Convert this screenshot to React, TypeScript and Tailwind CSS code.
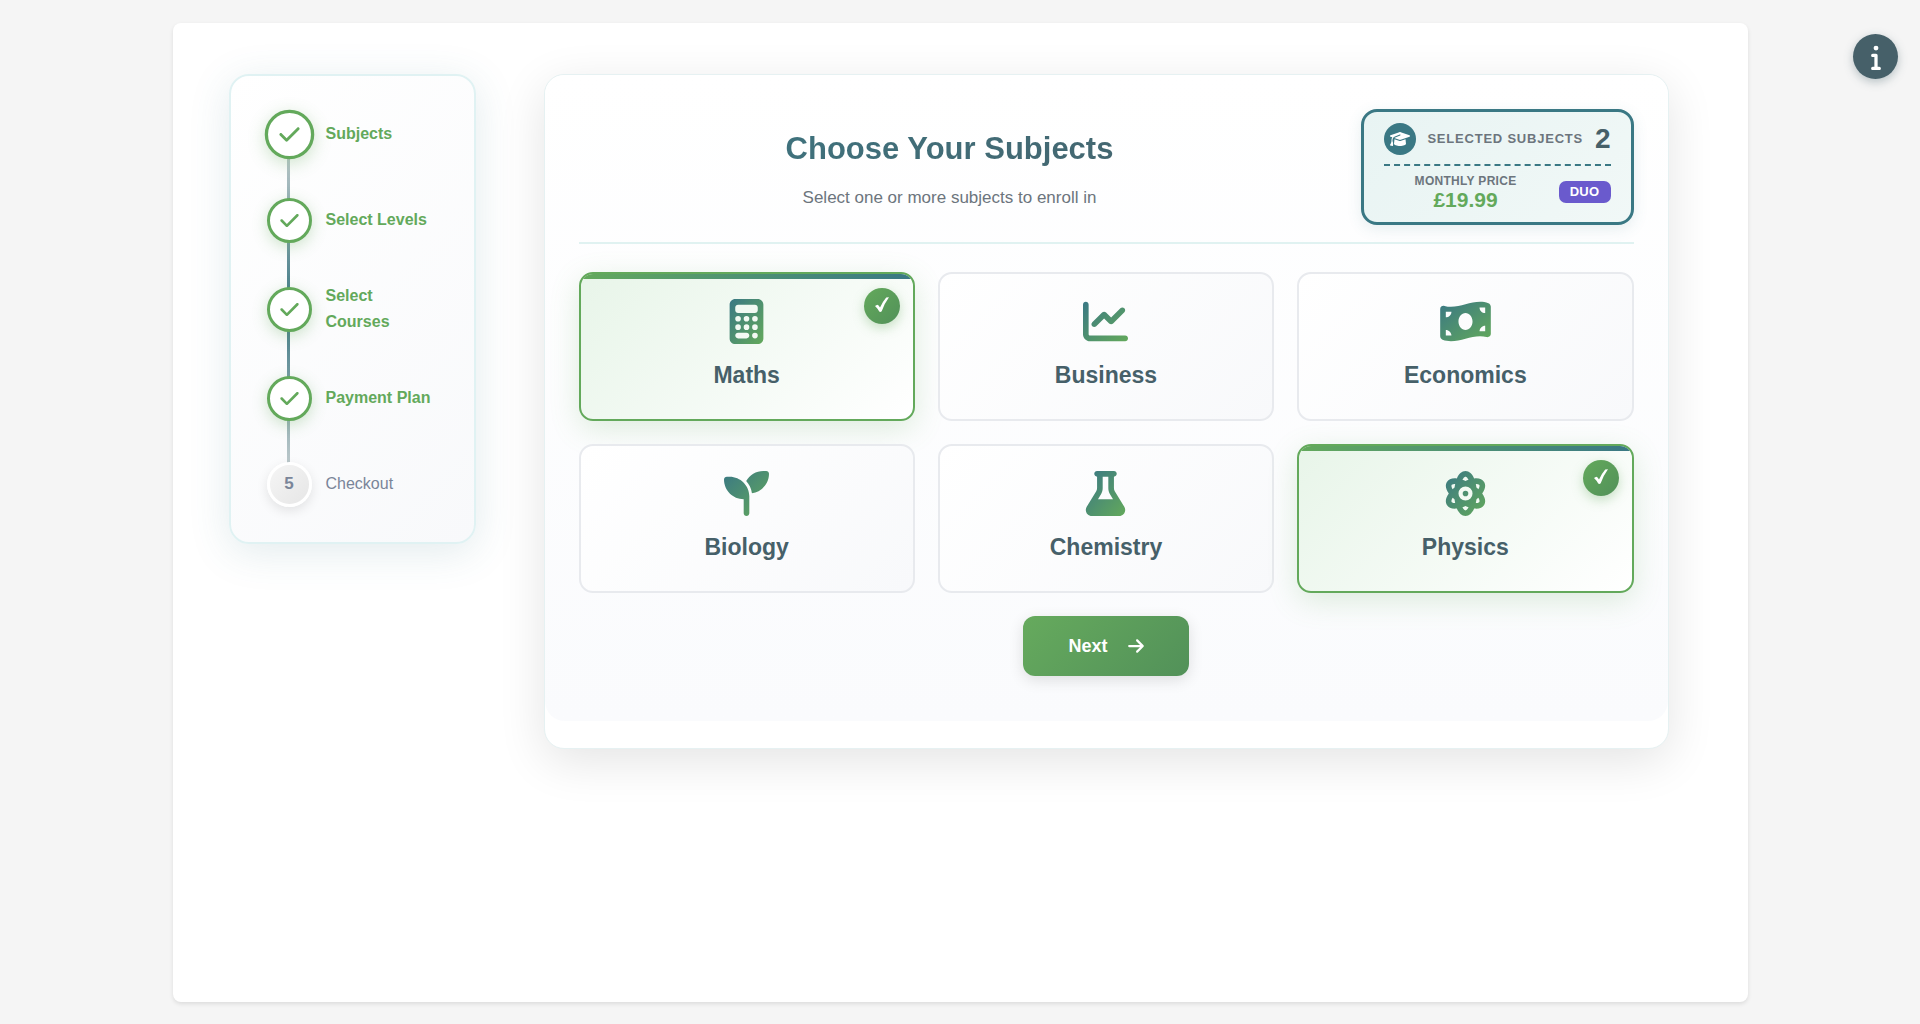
import React, { useState } from 'react';
import {
  FaArrowRight,
  FaAtom,
  FaCalculator,
  FaChartLine,
  FaCheck,
  FaFlask,
  FaGraduationCap,
  FaInfo,
  FaMoneyBillWave,
  FaSeedling,
} from 'react-icons/fa6';
import { clsx } from 'clsx';

const steps = [
  { label: 'Subjects', done: true, current: true },
  { label: 'Select Levels', done: true },
  { label: 'Select Courses', done: true },
  { label: 'Payment Plan', done: true },
  { label: 'Checkout', done: false },
];

const subjects = [
  { name: 'Maths', icon: FaCalculator },
  { name: 'Business', icon: FaChartLine },
  { name: 'Economics', icon: FaMoneyBillWave },
  { name: 'Biology', icon: FaSeedling },
  { name: 'Chemistry', icon: FaFlask },
  { name: 'Physics', icon: FaAtom },
];

const plans = [
  { name: 'NONE', price: '£0.00' },
  { name: 'SOLO', price: '£11.99' },
  { name: 'DUO', price: '£19.99' },
  { name: 'TRIO', price: '£26.99' },
];

const StepNav = () => (
  <nav
    aria-label="Enrolment steps"
    className="w-[247px] shrink-0 rounded-[20px] border-2 border-[#e0f2f3] bg-linear-135 from-white to-[#f8f9fb] py-[35px] pr-[33px] pl-9 shadow-[0_8px_40px_rgba(58,120,132,0.15)]"
  >
    <ol className="relative flex flex-col gap-10">
      <span className="absolute inset-y-0 left-5 w-[3px] bg-linear-to-b from-[#e0e0e0] via-[#3a7884] to-[#e0e0e0]" />
      {steps.map((step, index) => (
        <li key={step.label} className="relative flex min-h-[46px] items-center gap-[14px]">
          <span
            className={clsx(
              'flex size-[45px] shrink-0 items-center justify-center rounded-full border-3 text-[17px] font-bold',
              step.done
                ? 'border-[#63a95b] bg-white text-[#63a95b] shadow-[0_4px_15px_rgba(99,169,91,0.3)]'
                : 'border-white bg-linear-135 from-[#f5f5f5] to-[#e6e6e6] text-[#7a8599] shadow-[0_4px_12px_rgba(0,0,0,0.1)]',
              step.current && 'scale-110'
            )}
          >
            {step.done ? <FaCheck className="size-[21px]" /> : index + 1}
          </span>
          <a
            href="#"
            className={clsx('leading-[26px]', step.done ? 'font-bold text-[#63a95b]' : 'text-[#7a8599]')}
          >
            {step.label}
          </a>
        </li>
      ))}
    </ol>
  </nav>
);

const PriceSummary = ({ count }: { count: number }) => {
  const plan = plans[Math.min(count, plans.length - 1)];

  return (
    <div className="w-[273px] shrink-0 rounded-2xl border-3 border-[#3a7884] bg-linear-135 from-[#e8f4f3] to-[#f1f8f7] px-5 py-[11px] shadow-[0_4px_15px_rgba(58,120,132,0.12)]">
      <div className="flex items-center justify-between pb-[9px]">
        <span className="flex size-8 items-center justify-center rounded-full bg-[#3a7884] text-white">
          <FaGraduationCap className="h-4 w-5" />
        </span>
        <span className="text-[13px] font-bold tracking-[0.06em] text-[#6c757d]">SELECTED SUBJECTS</span>
        <span className="text-[28px] leading-8 font-bold text-[#466069]">{count}</span>
      </div>
      <div className="flex items-center gap-[11px] border-t-2 border-dashed border-[#3a7884] pt-[7px]">
        <div className="flex-1 text-center">
          <div className="text-xs leading-4 font-bold tracking-wide text-[#6c757d]">MONTHLY PRICE</div>
          <div className="text-[21px] leading-[22px] font-bold text-[#63a95b]">{plan.price}</div>
        </div>
        <span className="rounded-[7px] bg-[#6a5acd] px-[11px] text-[13px] leading-[22px] font-bold tracking-wide text-white">
          {plan.name}
        </span>
      </div>
    </div>
  );
};

interface SubjectCardProps {
  name: string;
  icon: React.ElementType;
  selected: boolean;
  onToggle: () => void;
}

const SubjectCard = ({ name, icon: Icon, selected, onToggle }: SubjectCardProps) => (
  <button
    type="button"
    aria-pressed={selected}
    onClick={onToggle}
    className={clsx(
      'relative flex cursor-pointer flex-col items-center gap-[15px] overflow-hidden rounded-[14px] border-2 bg-linear-135 pt-[25px] pb-7',
      selected
        ? 'border-[#63a95b] from-[#e8f5e9] to-white shadow-[0_8px_30px_rgba(99,169,91,0.2)]'
        : 'border-[#e8eaee] from-white to-[#f8f9fb]'
    )}
  >
    {selected && (
      <>
        <span className="absolute inset-x-0 top-0 h-[5px] bg-linear-to-r from-[#63a95b] to-[#3a7884]" />
        <span className="absolute top-[14px] right-[13px] size-9 rounded-full bg-linear-135 from-[#63a95b] to-[#529159] text-white shadow-[0_4px_12px_rgba(99,169,91,0.35)]">
          <svg viewBox="0 0 36 36" className="size-9" fill="currentColor" aria-hidden="true">
            <path d="M11 18 L13.3 16.8 Q14.6 16.9 16 19.6 Q19 13 22.2 9.4 L25 9.2 Q20.6 15 17.7 23.3 Q16.5 24.6 15.2 23.6 Q13.6 20.4 11 18Z" />
          </svg>
        </span>
      </>
    )}
    <Icon className="h-[45px] w-[51px] fill-[url(#subject-gradient)]" />
    <span className="text-[23px] leading-8 font-bold text-[#466069]">{name}</span>
  </button>
);

const App = () => {
  const [selected, setSelected] = useState(['Maths', 'Physics']);

  const toggle = (name: string) =>
    setSelected((current) =>
      current.includes(name) ? current.filter((item) => item !== name) : [...current, name]
    );

  return (
    <div className="min-h-screen bg-[#f5f5f5] py-[23px] font-['Liberation_Sans',Arial,sans-serif]">
      {/* Shared fill for the subject icons */}
      <svg className="absolute size-0" aria-hidden="true">
        <defs>
          <linearGradient id="subject-gradient" x1="0" y1="0" x2="1" y2="1">
            <stop offset="0" stopColor="#3a7884" />
            <stop offset="1" stopColor="#63a95b" />
          </linearGradient>
        </defs>
      </svg>

      <button
        type="button"
        aria-label="Information"
        className="fixed top-[34px] right-[22px] flex size-[45px] cursor-pointer items-center justify-center rounded-full bg-[#466069] text-white shadow-[0_3px_10px_rgba(70,96,105,0.35)]"
      >
        <FaInfo className="size-[26px]" />
      </button>

      <div className="mx-auto flex min-h-[calc(100vh-45px)] max-w-[1575px] items-start gap-[68px] rounded-lg bg-white pt-[51px] pr-[79px] pb-12 pl-14 shadow-[0_2px_4px_rgba(0,0,0,0.1)]">
        <StepNav />

        <main className="min-w-0 flex-1 rounded-[20px] border border-[#e6f1f2] bg-white pb-[27px] shadow-[0_12px_48px_rgba(0,0,0,0.11)]">
          <div className="rounded-[20px] bg-linear-to-b from-white to-[#fafbfd] px-[34px] pt-[34px] pb-[45px]">
            {/* Header */}
            <header className="mb-7 flex items-center gap-10 border-b-2 border-[#e0f2f1] pb-[17px]">
              <div className="flex-1 pt-0.5 text-center">
                <h1 className="mb-3 bg-linear-135 from-[#3a7884] to-[#466069] bg-clip-text text-[31px] leading-[48px] font-bold text-transparent">
                  Choose Your Subjects
                </h1>
                <p className="text-[17px] leading-[26px] text-[#6c757d]">Select one or more subjects to enroll in</p>
              </div>
              <PriceSummary count={selected.length} />
            </header>

            {/* Subjects */}
            <div className="grid grid-cols-3 gap-[23px]">
              {subjects.map((subject) => (
                <SubjectCard
                  key={subject.name}
                  name={subject.name}
                  icon={subject.icon}
                  selected={selected.includes(subject.name)}
                  onToggle={() => toggle(subject.name)}
                />
              ))}
            </div>

            <div className="mt-[23px] flex justify-center">
              <button
                type="button"
                className="flex h-[60px] cursor-pointer items-center gap-5 rounded-xl bg-linear-135 from-[#66aa5d] to-[#529159] px-[45px] text-lg font-bold text-white shadow-[0_4px_15px_rgba(0,0,0,0.12)]"
              >
                Next
                <FaArrowRight className="h-[18px] w-4" />
              </button>
            </div>
          </div>
        </main>
      </div>
    </div>
  );
};

export default App;
